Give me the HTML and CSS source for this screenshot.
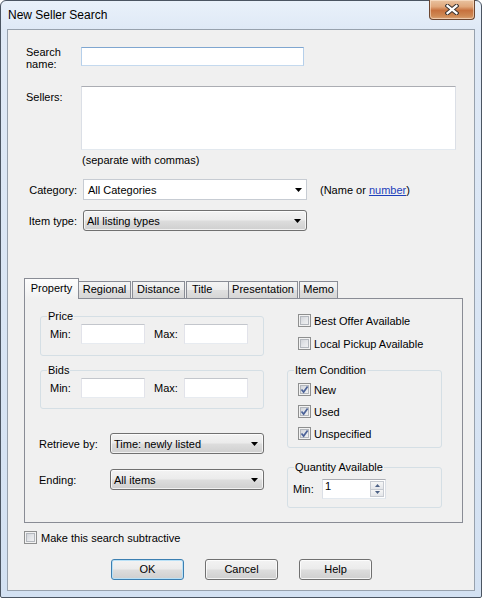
FILE: index.html
```html
<!DOCTYPE html>
<html>
<head>
<meta charset="utf-8">
<title>New Seller Search</title>
<link rel="stylesheet" href="styles.css">
</head>
<body>
<div class="window">
  <div class="titlebar">
    <span class="title">New Seller Search</span>
    <div class="close">
      <svg width="14" height="11" viewBox="0 0 14 11"><path d="M2.5 1.8 L11.5 9.2 M11.5 1.8 L2.5 9.2" stroke="#3b3330" stroke-width="4.2" stroke-linecap="square"/><path d="M2.5 1.8 L11.5 9.2 M11.5 1.8 L2.5 9.2" stroke="#ffffff" stroke-width="2.2" stroke-linecap="square"/></svg>
    </div>
  </div>
  <div class="client">
    <div class="row r-search">
      <label class="lbl-left lbl-search">Search<br>name:</label>
      <div class="textbox tb-focus tb-name"></div>
    </div>
    <div class="row r-sellers">
      <label class="lbl-left lbl-sellers">Sellers:</label>
      <div class="textbox tb-sellers"></div>
    </div>
    <div class="note">(separate with commas)</div>
    <div class="row r-cat">
      <label class="lbl-right">Category:</label>
      <div class="combo combo-edit wide"><span>All Categories</span><svg class="arrow" width="7" height="4" viewBox="0 0 7 4"><path d="M0 0 H7 L3.5 4 Z" fill="#000"/></svg></div>
      <span class="hint">(Name or <a class="link" href="#">number</a>)</span>
    </div>
    <div class="row r-type">
      <label class="lbl-right">Item type:</label>
      <div class="combo combo-list wide"><span>All listing types</span><svg class="arrow" width="7" height="4" viewBox="0 0 7 4"><path d="M0 0 H7 L3.5 4 Z" fill="#000"/></svg></div>
    </div>

    <div class="tabs">
      <div class="tabstrip">
        <div class="tab selected t-property">Property</div>
        <div class="tab t-regional">Regional</div>
        <div class="tab t-distance">Distance</div>
        <div class="tab t-title">Title</div>
        <div class="tab t-presentation">Presentation</div>
        <div class="tab t-memo">Memo</div>
      </div>
      <div class="tabpanel">
        <div class="col-left">
          <fieldset class="group g-price">
            <legend>Price</legend>
            <div class="minmax">
              <span class="mm-lbl mm-min">Min:</span><div class="textbox tb-small"></div>
              <span class="mm-lbl mm-max">Max:</span><div class="textbox tb-small"></div>
            </div>
          </fieldset>
          <fieldset class="group g-bids">
            <legend>Bids</legend>
            <div class="minmax">
              <span class="mm-lbl mm-min">Min:</span><div class="textbox tb-small"></div>
              <span class="mm-lbl mm-max">Max:</span><div class="textbox tb-small"></div>
            </div>
          </fieldset>
          <div class="sel-row r-retrieve">
            <span class="sel-lbl">Retrieve by:</span>
            <div class="combo combo-list narrow"><span>Time: newly listed</span><svg class="arrow" width="7" height="4" viewBox="0 0 7 4"><path d="M0 0 H7 L3.5 4 Z" fill="#000"/></svg></div>
          </div>
          <div class="sel-row r-ending">
            <span class="sel-lbl">Ending:</span>
            <div class="combo combo-list narrow"><span>All items</span><svg class="arrow" width="7" height="4" viewBox="0 0 7 4"><path d="M0 0 H7 L3.5 4 Z" fill="#000"/></svg></div>
          </div>
        </div>
        <div class="col-right">
          <div class="check c-offer"><span class="box"></span><span>Best Offer Available</span></div>
          <div class="check c-pickup"><span class="box"></span><span>Local Pickup Available</span></div>
          <fieldset class="group g-cond">
            <legend>Item Condition</legend>
            <div class="check"><span class="box checked"><svg width="9" height="9" viewBox="0 0 9 9"><path d="M1.5 4.5 L3.6 7 L7.6 1.4" fill="none" stroke="#4b6298" stroke-width="1.7"/></svg></span><span>New</span></div>
            <div class="check c-gap"><span class="box checked"><svg width="9" height="9" viewBox="0 0 9 9"><path d="M1.5 4.5 L3.6 7 L7.6 1.4" fill="none" stroke="#4b6298" stroke-width="1.7"/></svg></span><span>Used</span></div>
            <div class="check c-gap"><span class="box checked"><svg width="9" height="9" viewBox="0 0 9 9"><path d="M1.5 4.5 L3.6 7 L7.6 1.4" fill="none" stroke="#4b6298" stroke-width="1.7"/></svg></span><span>Unspecified</span></div>
          </fieldset>
          <fieldset class="group g-qty">
            <legend>Quantity Available</legend>
            <div class="qty-row">
              <span class="qty-lbl">Min:</span>
              <div class="spinner">
                <span class="spin-val">1</span>
                <div class="spin-btns">
                  <div class="spin-btn"><svg width="5" height="3" viewBox="0 0 5 3"><path d="M0 3 H5 L2.5 0 Z" fill="#4d6185"/></svg></div>
                  <div class="spin-btn"><svg width="5" height="3" viewBox="0 0 5 3"><path d="M0 0 H5 L2.5 3 Z" fill="#4d6185"/></svg></div>
                </div>
              </div>
            </div>
          </fieldset>
        </div>
      </div>
    </div>

    <div class="check subtractive"><span class="box"></span><span>Make this search subtractive</span></div>

    <div class="buttons">
      <div class="btn btn-default">OK</div>
      <div class="btn">Cancel</div>
      <div class="btn">Help</div>
    </div>
  </div>
</div>
</body>
</html>
```

FILE: styles.css
```css
* { box-sizing: border-box; }
html, body { margin: 0; padding: 0; }
body {
  width: 482px;
  height: 598px;
  overflow: hidden;
  background: #ffffff;
  font-family: "Liberation Sans", Arial, sans-serif;
  font-size: 11px;
  line-height: 12px;
  color: #000;
}

/* window frame */
.window {
  width: 482px;
  height: 598px;
  border: 1px solid #4b5562;
  border-radius: 6px 6px 2px 2px;
  background: linear-gradient(180deg, #e9f1fa 0px, #dfe9f6 28px, #d3e1f2 100%);
  padding: 0 6px 6px;
  display: flex;
  flex-direction: column;
}
.titlebar {
  flex: none;
  height: 28px;
  display: flex;
  justify-content: space-between;
  align-items: flex-start;
}
.title {
  margin-top: 7px;
  margin-left: 1px;
  font-size: 12px;
  line-height: 14px;
  color: #000;
}
.close {
  width: 46px;
  height: 20px;
  margin-top: -1px;
  border: 1px solid #6b4630;
  border-top: none;
  border-radius: 0 0 4px 4px;
  background: linear-gradient(180deg, #e9c3a1 0%, #e0a77b 35%, #c7713e 55%, #cf8a55 85%, #dca47a 100%);
  box-shadow: inset 0 0 0 1px rgba(255, 235, 215, 0.55);
  display: flex;
  align-items: center;
  justify-content: center;
}
.close svg { display: block; }

.client {
  flex: 1;
  border: 1px solid #97a1ad;
  background: #f0f0f0;
  display: flex;
  flex-direction: column;
}

/* generic rows */
.row { display: flex; }
.lbl-left { display: block; }

.r-search { margin-top: 16px; padding-left: 18px; align-items: flex-start; }
.lbl-search { width: 55px; }
.tb-name { width: 223px; height: 19px; margin-top: 1px; }

.r-sellers { margin-top: 16px; padding-left: 18px; align-items: flex-start; }
.lbl-sellers { width: 55px; margin-top: 5px; }
.tb-sellers { width: 375px; height: 64px; }

.note { margin-top: 4px; padding-left: 74px; }

.r-cat { margin-top: 13px; align-items: center; }
.r-type { margin-top: 10px; align-items: center; }
.lbl-right { width: 69px; text-align: right; margin-right: 6px; }
.hint { margin-left: 13px; }
.link { color: #1d3fbb; text-decoration: underline; }

/* text boxes */
.textbox {
  background: #fff;
  border: 1px solid;
  border-color: #abadb3 #dbdfe6 #e3e9ef #dbdfe6;
}
.tb-focus { border-color: #7fa6d0 #b5cfea #c4d9ee #b5cfea; }
.tb-small { width: 64px; height: 20px; border-color: #c3c6cc #e2e3ea #e7ebf0 #e2e3ea; }

/* combos */
.combo {
  display: flex;
  align-items: center;
  justify-content: space-between;
  height: 21px;
  white-space: nowrap;
}
.combo .arrow { display: block; flex: none; }
.wide { width: 224px; }
.narrow { width: 154px; }
.combo-edit {
  background: #fff;
  border: 1px solid #c7ccd3;
  padding: 0 4px 0 4px;
}
.combo-list {
  border: 1px solid #707070;
  border-radius: 3px;
  background: linear-gradient(180deg, #f3f3f3 0%, #ebebeb 48%, #dddddd 52%, #cfcfcf 100%);
  box-shadow: inset 0 0 0 1px rgba(255, 255, 255, 0.7);
  padding: 0 5px 0 3px;
}

/* tabs */
.tabs { margin-top: 47px; margin-left: 16px; width: 439px; }
.tabstrip {
  display: flex;
  align-items: flex-end;
  height: 20px;
  position: relative;
  z-index: 1;
}
.tab {
  height: 17px;
  border: 1px solid #898c95;
  border-bottom: none;
  background: linear-gradient(180deg, #f4f4f4 0%, #ececec 50%, #e0e0e0 51%, #d6d6d6 100%);
  text-align: center;
  line-height: 15px;
  white-space: nowrap;
}
.tab.selected {
  height: 21px;
  margin-bottom: -1px;
  background: linear-gradient(180deg, #fdfdfd 0%, #f6f6f6 60%, #f0f0f0 100%);
  line-height: 18px;
}
.t-property { width: 55px; }
.t-regional { width: 53px; margin-left: -1px; }
.t-distance { width: 53px; margin-left: 1px; }
.t-title { width: 43px; margin-left: 1px; text-align: left; padding-left: 5px; }
.t-presentation { width: 70px; margin-left: -1px; }
.t-memo { width: 39px; margin-left: 1px; }

.tabpanel {
  height: 225px;
  border: 1px solid #898c95;
  background: #f0f0f0;
  display: flex;
  align-items: flex-start;
}

/* group boxes */
.group {
  margin: 0;
  border: 1px solid #d5dfe5;
  border-radius: 3px;
  min-width: 0;
}
.group legend {
  padding: 0 1px;
  line-height: 12px;
}

.col-left { margin-left: 15px; width: 224px; display: flex; flex-direction: column; }
.g-price { margin-top: 11px; padding: 2px 8px 11px 9px; }
.g-bids { margin-top: 8px; padding: 2px 8px 10px 9px; }
.g-price legend, .g-bids legend { margin-left: -3px; }
.minmax { display: flex; align-items: center; }
.mm-lbl { display: block; }
.mm-min { width: 31px; }
.mm-max { width: 30px; margin-left: 9px; }

.sel-row { display: flex; align-items: center; }
.sel-lbl { width: 71px; margin-left: -1px; }
.r-retrieve { margin-top: 24px; }
.r-ending { margin-top: 15px; }

.col-right { margin-left: 23px; width: 155px; display: flex; flex-direction: column; }

/* checkboxes */
.check { display: flex; align-items: center; height: 13px; white-space: nowrap; }
.box {
  flex: none;
  width: 13px;
  height: 13px;
  margin-right: 3px;
  border: 1px solid #8e8f8f;
  background: linear-gradient(135deg, #c9ccd2 0%, #e3e5e8 50%, #f6f6f6 100%);
  box-shadow: inset 0 0 0 1px #f2f2f2, inset 0 0 0 2px #b3b7bd;
  display: flex;
  align-items: center;
  justify-content: center;
}
.box svg { display: block; }
.c-offer { margin-top: 15px; margin-left: 11px; }
.c-pickup { margin-top: 10px; margin-left: 11px; }

.g-cond { margin-top: 14px; padding: 7px 6px 7px 10px; }
.g-cond legend { margin-left: -4px; }
.c-gap { margin-top: 9px; }

.g-qty { margin-top: 13px; padding: 6px 6px 8px 5px; }
.g-qty legend { margin-left: 1px; }
.qty-row { display: flex; align-items: center; }
.qty-lbl { width: 29px; }
.spinner {
  width: 64px;
  height: 20px;
  background: #fff;
  border: 1px solid;
  border-color: #abadb3 #dbdfe6 #e3e9ef #dbdfe6;
  display: flex;
  justify-content: space-between;
}
.spin-val { padding-left: 2px; line-height: 13px; }
.spin-btns { width: 15px; display: flex; flex-direction: column; padding: 1px 1px 1px 0; }
.spin-btn {
  flex: 1;
  border: 1px solid #c6cad1;
  background: linear-gradient(180deg, #f6f6f6, #e4e6ea);
  display: flex;
  align-items: center;
  justify-content: center;
}
.spin-btn + .spin-btn { border-top: none; }

/* bottom */
.subtractive { margin-top: 8px; margin-left: 16px; }
.subtractive .box { margin-right: 4px; }

.buttons { margin-top: 15px; padding-left: 103px; display: flex; gap: 21px; }
.btn {
  width: 73px;
  height: 21px;
  border: 1px solid #707070;
  border-radius: 3px;
  background: linear-gradient(180deg, #f3f3f3 0%, #ebebeb 48%, #dddddd 52%, #cfcfcf 100%);
  box-shadow: inset 0 0 0 1px rgba(255, 255, 255, 0.75);
  text-align: center;
  line-height: 19px;
}
.btn-default {
  border-color: #3c7fb1;
  box-shadow: inset 0 0 0 1px #b9e1f7;
}
```
